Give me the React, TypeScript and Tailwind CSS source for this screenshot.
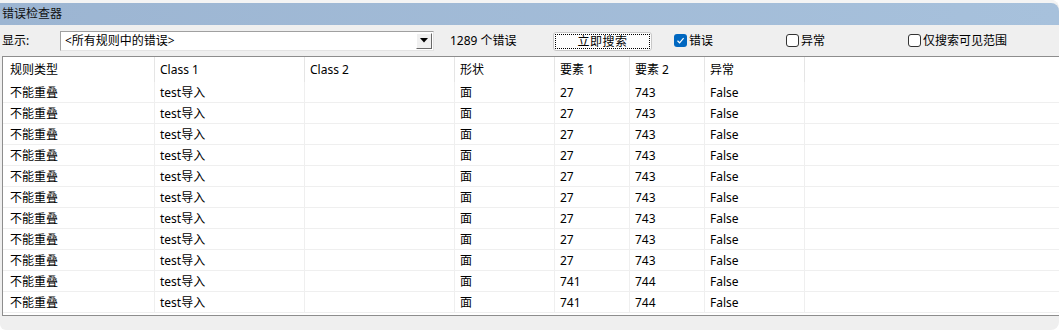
import React from "react";

const font = { fontFamily: '"Noto Sans", "Noto Sans CJK SC", sans-serif' };

type Row = { a: string; b: string; c: string; d: string; e: string; f: string; g: string };

const rows: Row[] = [
  ...Array.from({ length: 9 }, () => ({ a: "不能重叠", b: "test导入", c: "", d: "面", e: "27", f: "743", g: "False" })),
  ...Array.from({ length: 2 }, () => ({ a: "不能重叠", b: "test导入", c: "", d: "面", e: "741", f: "744", g: "False" })),
];

const cols = "grid grid-cols-[152px_150px_150px_100px_75px_75px_100px_1fr]";

function Checkbox({ checked, label }: { checked?: boolean; label: string }) {
  return (
    <div className="flex items-center gap-[2px]">
      {checked ? (
        <div className="w-[13px] h-[13px] rounded-[3px] bg-[#0067c0] flex items-center justify-center">
          <svg width="9" height="9" viewBox="0 0 9 9">
            <path d="M1.5 4.8 L3.6 6.8 L7.6 2.2" fill="none" stroke="white" strokeWidth="1.2" />
          </svg>
        </div>
      ) : (
        <div className="w-[13px] h-[13px] rounded-[3px] bg-white border border-[#333]" />
      )}
      <span className="text-[12px] leading-[14px] text-black">{label}</span>
    </div>
  );
}

export default function App() {
  return (
    <div className="w-[1059px] h-[330px] bg-white overflow-hidden" style={font}>
      <div className="h-[330px] bg-[#efefef] rounded-tr-[8px] rounded-br-[8px] rounded-bl-[6px] flex flex-col overflow-hidden">
        <div className="h-[3px] bg-[#f4f4f4]" />
        {/* title */}
        <div className="h-[22px] bg-gradient-to-r from-[#9cb5d2] to-[#a7c1dc] rounded-tr-[8px] flex items-center pl-[2px]">
          <span className="text-[12px] leading-[14px] text-[#111]">错误检查器</span>
        </div>
        {/* toolbar */}
        <div className="h-[31px] flex items-center text-[12px] text-black">
          <span className="ml-[2px] w-[58px] leading-[14px] pt-[1px]">显示:</span>
          <div className="w-[374px] h-[20px] bg-white border border-[#a0a0a0] border-r-[#e3e3e3] border-b-[#e3e3e3] flex items-center justify-between">
            <span className="pl-[4px] leading-[14px]">&lt;所有规则中的错误&gt;</span>
            <div className="w-[16px] h-[16px] mr-[1px] bg-[#f0f0f0] border border-[#fff] border-r-[#696969] border-b-[#696969] flex items-center justify-center">
              <svg width="8" height="5" viewBox="0 0 8 5">
                <path d="M0 0 L8 0 L4 4.5 Z" fill="#000" />
              </svg>
            </div>
          </div>
          <span className="ml-[16px] w-[103px] leading-[14px] pt-[1px]">1289 个错误</span>
          <div className="w-[99px] h-[19px] mt-[2px] rounded-[3px] border border-[#c8c8c8] bg-[#fdfdfd] p-[1px]">
            <div className="w-full h-full border border-dotted border-black flex items-center justify-center">
              <span className="text-[12px] leading-[14px] tracking-[0.5px]">立即搜索</span>
            </div>
          </div>
          <div className="ml-[22px] w-[112px]">
            <Checkbox checked label="错误" />
          </div>
          <div className="w-[122px]">
            <Checkbox label="异常" />
          </div>
          <Checkbox label="仅搜索可见范围" />
        </div>
        {/* table */}
        <div className="ml-[2px] h-[260px] bg-white border-t border-l border-b border-[#8d8d8d] text-[12px] text-black">
          <div className={`${cols} h-[25px]`}>
            {["规则类型", "Class 1", "Class 2", "形状", "要素 1", "要素 2", "异常", ""].map((h, i) => (
              <div
                key={i}
                className={`flex items-center leading-[14px] ${i === 0 ? "pl-[7px]" : "pl-[5px]"} ${i < 7 ? "border-r border-[#e5e5e5]" : ""}`}
              >
                {h}
              </div>
            ))}
          </div>
          {rows.map((r, ri) => (
            <div key={ri} className={`${cols} h-[21px] border-b border-[#efefef]`}>
              {[r.a, r.b, r.c, r.d, r.e, r.f, r.g, ""].map((v, i) => (
                <div
                  key={i}
                  className={`flex items-center leading-[14px] pt-[2px] ${i === 0 ? "pl-[7px]" : "pl-[5px]"} ${i < 7 ? "border-r border-[#efefef]" : ""}`}
                >
                  {v}
                </div>
              ))}
            </div>
          ))}
        </div>
      </div>
    </div>
  );
}
